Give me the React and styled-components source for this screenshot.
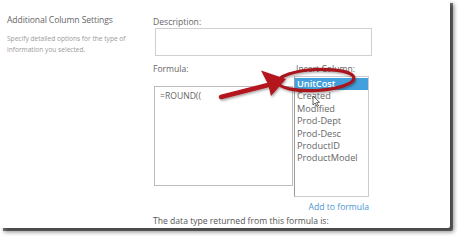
import React from 'react';
import styled, { createGlobalStyle } from 'styled-components';

const GlobalStyle = createGlobalStyle`
  html, body {
    margin: 0;
    padding: 0;
    background: #fff;
  }
  body {
    width: 465px;
    height: 243px;
    overflow: hidden;
    font-family: "Open Sans", "Noto Sans", sans-serif;
  }
`;

const Panel = styled.div`
  position: relative;
  display: flex;
  width: 450px;
  height: 228px;
  background: #fff;
  box-shadow: 3px 3px 0 rgba(0, 0, 0, 0.5), 4px 4px 4px rgba(0, 0, 0, 0.45);
  border-bottom-right-radius: 2px;
`;

const SideColumn = styled.div`
  width: 146px;
  padding: 14px 0 0 7px;
  box-sizing: border-box;
`;

const SectionTitle = styled.div`
  font-size: 8.6px;
  line-height: 12px;
  color: #666;
  letter-spacing: -0.1px;
`;

const HelpText = styled.div`
  margin-top: 7px;
  font-size: 6.6px;
  line-height: 11px;
  color: #9a9a9a;
  width: 130px;
`;

const MainColumn = styled.div`
  display: flex;
  flex-direction: column;
  padding: 16px 0 0 7px;
`;

const Label = styled.div`
  font-size: 8.6px;
  line-height: 12px;
  color: #666;
  padding-left: ${(p) => p.indent || 0}px;
`;

const InputBox = styled.div`
  margin-left: 2px;
  width: 217px;
  height: 28px;
  box-sizing: border-box;
  border: 1px solid #cfcfcf;
`;

const FormulaRow = styled.div`
  display: flex;
  margin-top: 7px;
`;

const FormulaColumn = styled.div`
  width: 141px;
`;

const FormulaArea = styled.div`
  margin: 11px 0 0 1px;
  width: 139px;
  height: 100px;
  box-sizing: border-box;
  border: 1px solid #bcbcbc;
  padding: 3px 5px;
  font-size: 8.6px;
  line-height: 12px;
  color: #666;
`;

const InsertColumn = styled.div`
  display: flex;
  flex-direction: column;
  width: 75px;
`;

const ListBox = styled.div`
  margin-top: 1px;
  height: 121px;
  box-sizing: border-box;
  border: 1px solid #cccccc;
  border-left-color: #9a9a9a;
  padding-top: 1px;
`;

const ListItem = styled.div`
  height: 12.4px;
  line-height: 12px;
  padding-left: 2px;
  font-size: 9.2px;
  color: ${(p) => (p.selected ? '#fff' : '#666')};
  background: ${(p) => (p.selected ? '#44a0dc' : 'transparent')};
  font-weight: ${(p) => (p.selected ? 600 : 400)};
`;

const AddLink = styled.div`
  margin-top: 4px;
  text-align: right;
  font-size: 8.6px;
  line-height: 12px;
  color: #4a96d2;
`;

const Footnote = styled.div`
  margin-top: 2px;
  font-size: 8.6px;
  line-height: 12px;
  color: #555;
`;

const Overlay = styled.svg`
  position: absolute;
  left: 0;
  top: 0;
  pointer-events: none;
`;

const columns = ['UnitCost', 'Created', 'Modified', 'Prod-Dept', 'Prod-Desc', 'ProductID', 'ProductModel'];

export default function App() {
  return (
    <>
      <GlobalStyle />
      <Panel>
        <SideColumn>
          <SectionTitle>Additional Column Settings</SectionTitle>
          <HelpText>Specify detailed options for the type of information you selected.</HelpText>
        </SideColumn>
        <MainColumn>
          <Label>Description:</Label>
          <InputBox />
          <FormulaRow>
            <FormulaColumn>
              <Label>Formula:</Label>
              <FormulaArea>=ROUND((</FormulaArea>
            </FormulaColumn>
            <InsertColumn>
              <Label indent={2}>Insert Column:</Label>
              <ListBox>
                {columns.map((c, i) => (
                  <ListItem key={c} selected={i === 0}>{c}</ListItem>
                ))}
              </ListBox>
              <AddLink>Add to formula</AddLink>
            </InsertColumn>
          </FormulaRow>
          <Footnote>The data type returned from this formula is:</Footnote>
        </MainColumn>

        {/* callout drawn over the form */}
        <Overlay width="450" height="228" viewBox="0 0 450 228">
          <defs>
            <filter id="soft" x="-20%" y="-40%" width="140%" height="180%">
              <feDropShadow dx="1" dy="1.5" stdDeviation="1" floodColor="#000" floodOpacity="0.35" />
            </filter>
          </defs>
          <g filter="url(#soft)">
            <ellipse cx="316" cy="80" rx="38" ry="10.5" fill="none" stroke="#a8141e" strokeWidth="3.2" transform="rotate(-3 316 80)" />
            <line x1="221" y1="97" x2="270" y2="84.5" stroke="#b3141c" strokeWidth="4.5" strokeLinecap="round" />
            <polygon points="286,79 261,70.5 268,84 271,96" fill="#b3141c" />
          </g>
          <path d="M313 96 L313 105 L315.2 103 L317 106.5 L318.4 105.8 L316.7 102.5 L319.5 102.3 Z" fill="#fff" stroke="#222" strokeWidth="0.7" />
        </Overlay>
      </Panel>
    </>
  );
}
